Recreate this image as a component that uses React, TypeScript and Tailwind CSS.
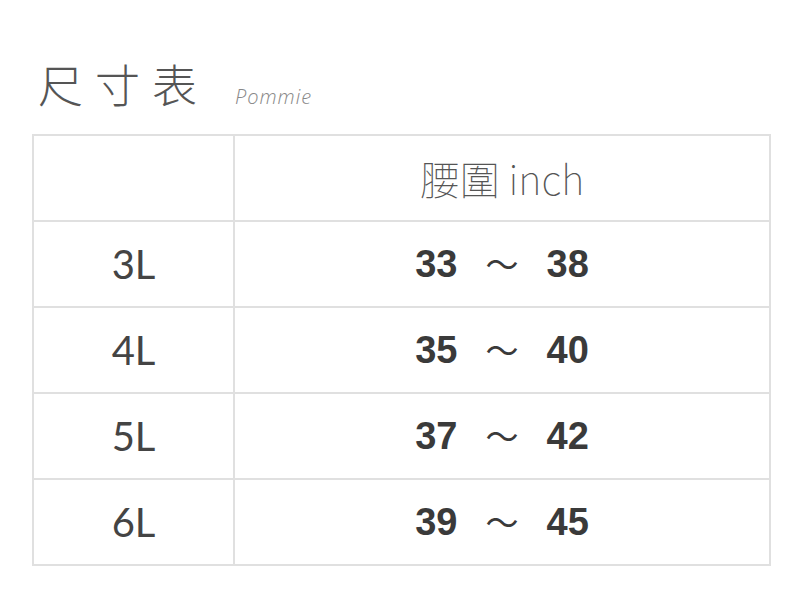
const rows = [
  { size: '3L', from: '33', to: '38' },
  { size: '4L', from: '35', to: '40' },
  { size: '5L', from: '37', to: '42' },
  { size: '6L', from: '39', to: '45' },
]

export default function App() {
  return (
    <div className="h-[597px] w-[800px] bg-white font-['Noto_Sans','Noto_Sans_CJK_TC',sans-serif]">
      <div className="flex items-end pl-[38px] pt-[54px]">
        <h1 className="font-['Noto_Sans_CJK_TC',sans-serif] text-[45px] leading-[60px] font-light tracking-[12px] text-[#555]">
          尺寸表
        </h1>
        <span className="mb-[2px] ml-[26px] font-['Open_Sans',sans-serif] text-[20px] font-light italic tracking-[1px] text-[#888]">
          Pommie
        </span>
      </div>

      <div className="ml-[32px] mt-[20px] grid w-[739px] grid-cols-[201px_1fr] border-t-2 border-l-2 border-[#e0e0e0]">
        <div className="h-[86px] border-r-2 border-b-2 border-[#e0e0e0]" />
        <div className="flex h-[86px] items-center justify-center border-r-2 border-b-2 border-[#e0e0e0] font-['Noto_Sans_CJK_TC',sans-serif] text-[40px] font-thin text-[#555]">
          腰圍 inch
        </div>
        {rows.map((r) => (
          <div key={r.size} className="contents">
            <div className="flex h-[86px] items-center justify-center border-r-2 border-b-2 border-[#e0e0e0] font-['Lato',sans-serif] text-[40px] font-normal text-[#444]">
              {r.size}
            </div>
            <div className="flex h-[86px] items-center justify-center gap-[28px] border-r-2 border-b-2 border-[#e0e0e0] font-['Liberation_Sans',sans-serif] text-[38px] font-bold text-[#3a3a3a]">
              <span>{r.from}</span>
              <span className="font-['Noto_Sans_CJK_TC',sans-serif] text-[33px] font-normal">～</span>
              <span>{r.to}</span>
            </div>
          </div>
        ))}
      </div>
    </div>
  )
}
